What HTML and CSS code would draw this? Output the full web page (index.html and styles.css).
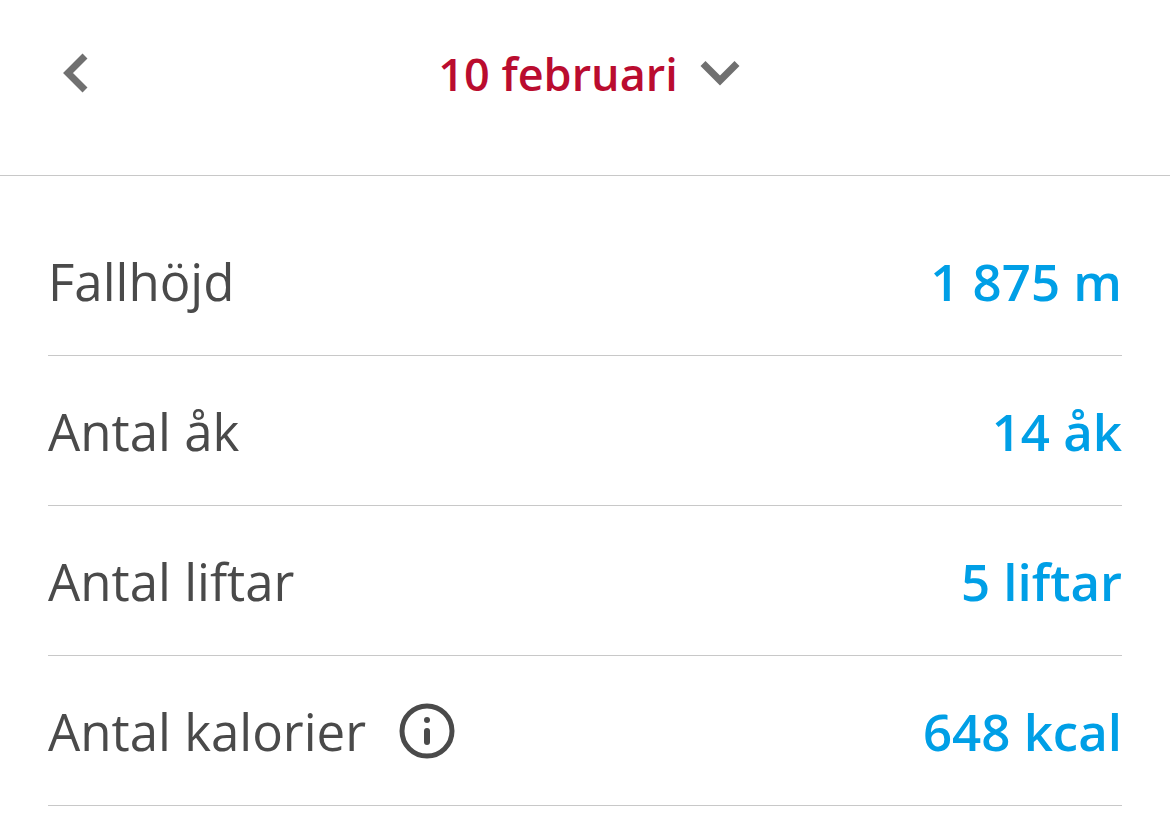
FILE: index.html
```html
<!DOCTYPE html>
<html lang="sv">
<head>
<meta charset="utf-8">
<meta name="viewport" content="width=device-width, initial-scale=1">
<title>10 februari</title>
<link rel="stylesheet" href="styles.css">
</head>
<body>
<header class="day-bar">
  <button class="icon-button" type="button" aria-label="Föregående dag">
    <svg class="icon-back" viewBox="0 0 28 40" aria-hidden="true"><path d="M25 2 8 19l17 17"/></svg>
  </button>
  <button class="day-picker" type="button">
    <span>10 februari</span>
    <svg class="icon-down" viewBox="0 0 40 26" aria-hidden="true"><path d="M3 2.500l17 17 17-17"/></svg>
  </button>
</header>
<main>
  <dl class="stats">
    <div class="stat"><dt>Fallhöjd</dt><dd>1 875 m</dd></div>
    <div class="stat"><dt>Antal åk</dt><dd>14 åk</dd></div>
    <div class="stat"><dt>Antal liftar</dt><dd>5 liftar</dd></div>
    <div class="stat">
      <dt>Antal kalorier
        <button class="icon-button info-button" type="button" aria-label="Om kalorier">
          <svg class="icon-info" viewBox="0 0 56 56" aria-hidden="true"><circle class="ring" cx="28" cy="28" r="25"/><circle cx="28" cy="17" r="3"/><rect x="25" y="25" width="6" height="17" rx="3"/></svg>
        </button>
      </dt>
      <dd>648 kcal</dd>
    </div>
  </dl>
</main>
</body>
</html>
```
FILE: styles.css
```css
* {
  box-sizing: border-box;
}

body {
  margin: 0;
  background: #fff;
  color: #4a4a4a;
  font-family: "Open Sans", "Noto Sans", sans-serif;
}

button {
  border: 0;
  padding: 0;
  background: none;
  font: inherit;
  color: inherit;
  cursor: pointer;
}

.day-bar {
  display: grid;
  grid-template-columns: 1fr auto 1fr;
  align-items: center;
  padding: 41px 60px 68px;
  border-bottom: 1px solid #c8c8c8;
}

.icon-button {
  display: flex;
  justify-self: start;
}

.day-picker {
  display: flex;
  align-items: center;
  gap: 22px;
  padding-left: 8px;
  color: #ba0c2f;
  font-size: 45px;
  font-weight: 600;
  line-height: 66px;
}

.icon-back,
.icon-down {
  overflow: visible;
  fill: none;
  stroke: #707070;
  stroke-width: 7;
}

.icon-back {
  width: 28px;
  height: 40px;
}

.icon-down {
  width: 40px;
  height: 26px;
}

.stats {
  margin: 0;
  padding: 30px 48px 0;
}

.stat {
  display: flex;
  align-items: center;
  justify-content: space-between;
  padding: 39px 0 37px;
  border-bottom: 1px solid #c8c8c8;
  font-size: 51px;
  line-height: 73px;
}

.stat dt {
  display: flex;
  align-items: center;
  gap: 33px;
}

.stat dd {
  margin: 0;
  color: #009fe6;
  font-weight: 600;
}

.info-button {
  padding-bottom: 2px;
}

.icon-info {
  width: 56px;
  height: 56px;
  fill: #4a4a4a;
}

.ring {
  fill: none;
  stroke: #4a4a4a;
  stroke-width: 5;
}
```
